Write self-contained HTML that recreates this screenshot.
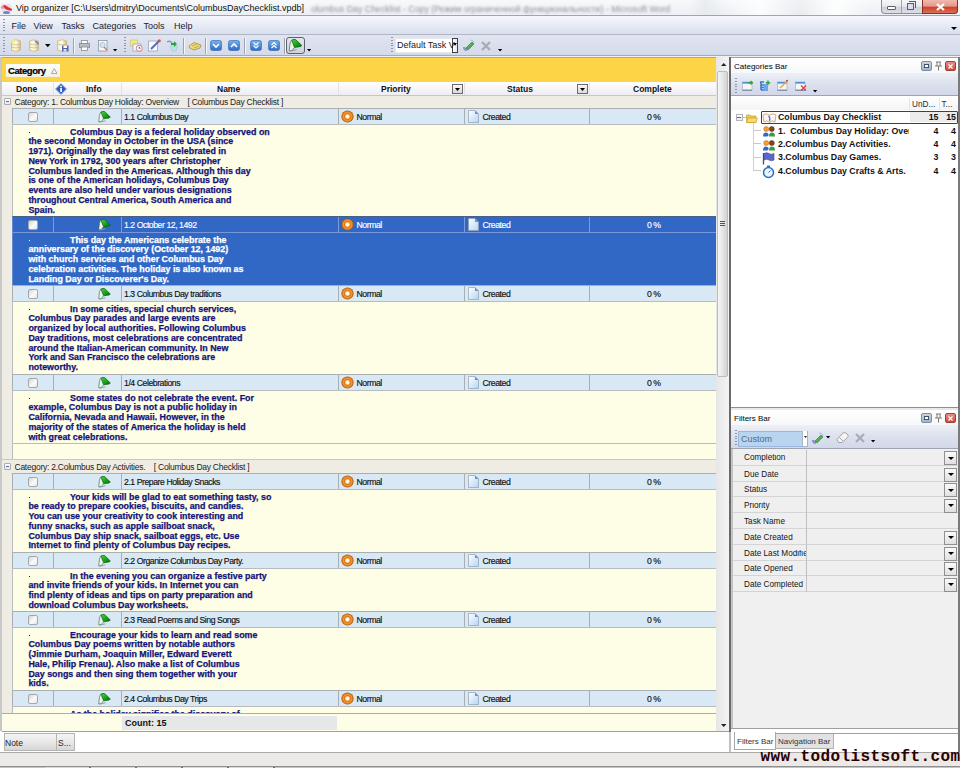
<!DOCTYPE html><html><head><meta charset="utf-8"><style>*{margin:0;padding:0;box-sizing:border-box}
html,body{width:960px;height:768px;overflow:hidden;background:#f0f0f0;font-family:"Liberation Sans",sans-serif;color:#000;position:relative}
.a{position:absolute}
.t{position:absolute;white-space:nowrap;line-height:1}
svg{position:absolute;overflow:visible}
#title{left:0;top:0;width:960px;height:16px;background:linear-gradient(90deg,rgba(255,255,255,0) 0,rgba(255,255,255,0) 690px,rgba(225,228,232,.6) 705px,rgba(255,255,255,0) 725px,rgba(255,255,255,.8) 760px,rgba(230,232,236,.5) 800px,rgba(255,255,255,.9) 835px,rgba(255,255,255,0) 870px),linear-gradient(#f7f9fb,#eceff3);border-bottom:1px solid #a0a6ae}
#menu{left:0;top:16px;width:960px;height:19px;background:linear-gradient(#f5f7fc,#d9dfee);border-bottom:1px solid #b0b6c4}
#tool{left:0;top:35px;width:960px;height:21px;background:linear-gradient(#e1e5f1,#d4daea);border-bottom:1px solid #a8aab2}
.grip{position:absolute;width:1.6px;background:repeating-linear-gradient(#8e98ac 0 1px,transparent 1px 2.8px)}
.sep{position:absolute;width:2px;background:#9aa2b4;border-right:1px solid #f4f6fa}
.mi{position:absolute;top:21.6px;font-size:9px;color:#1a1a30;line-height:1;white-space:nowrap}
#yel{left:2px;top:57px;width:714px;height:25px;background:#fcd445;border-top:1px solid #b5a870}
#hdr{left:2px;top:82px;width:714px;height:13px;background:linear-gradient(#ffffff,#eeeef2)}
.hd{position:absolute;top:84.8px;font-size:8.5px;font-weight:bold;line-height:1;white-space:nowrap;color:#111}
.grp{position:absolute;left:2px;width:714px;background:#efede3;border-top:1px solid #c8c8c0}
.gt{position:absolute;left:12.5px;top:2.9px;font-size:8.5px;letter-spacing:-0.25px;color:#1a1a1a;line-height:1;white-space:nowrap}
.exp{position:absolute;left:2px;top:3px;width:7px;height:7px;border:1px solid #a8acb4;border-radius:1px;background:linear-gradient(#fff,#e8e8e8)}
.exp:after{content:"";position:absolute;left:1px;top:2px;width:3px;height:1px;background:#5a6890}
.row{position:absolute;left:12px;width:704px;height:16px;background:#d9e8f5;border-top:1px solid #a8aeb2;border-left:1px solid #a8aeb2}
.row.sel{background:#3168c6;border-top:1px solid #4a5e8a;border-left-color:#6a8ad0}
.note{position:absolute;left:12px;width:704px;background:#fefee6;border-top:1px solid #b8bcbf;border-left:1px solid #b8bcbf;overflow:hidden}
.note.sel{background:#3168c6;border-top:1px solid #7896d8;border-left-color:#6a8ad0}
.nt{position:absolute;left:15.4px;top:2.5px;font-size:8.9px;font-weight:bold;color:#13137a;line-height:9.8px;white-space:nowrap;text-indent:41.6px;-webkit-text-stroke:0.25px #13137a}
.bul{position:absolute;left:16px;top:6.5px;width:1.2px;height:1.2px;background:#13137a}
.sel .bul{background:#fff}
.sel .nt{color:#fff;-webkit-text-stroke:0.25px #fff}
.c{position:absolute;top:0;height:15px;border-left:1px solid #a8aeb2}
.sel .c{border-left-color:#7e9bd8}
.rt{position:absolute;top:4.3px;font-size:8.7px;letter-spacing:-0.45px;color:#101010;line-height:1;white-space:nowrap;-webkit-text-stroke:0.15px #101010}
.sel .rt{color:#fff;-webkit-text-stroke:0.15px #fff}
.chk{position:absolute;left:14.5px;top:2.5px;width:10px;height:10px;border:1px solid #a4a8ac;border-radius:2px;background:linear-gradient(135deg,#d4d4d4,#fafafa 55%,#e6e6e6)}
.gfoot{position:absolute;left:12px;width:704px;background:#fefee6;border-top:1px solid #b8bcbf;border-left:1px solid #b8bcbf}
.tr{position:absolute;font-size:8.8px;font-weight:bold;color:#111;line-height:1;white-space:nowrap}
.tn{position:absolute;font-size:8.8px;font-weight:bold;color:#111;line-height:1;white-space:nowrap;text-align:right;width:20px}
.fl{position:absolute;left:733px;width:225px;border-bottom:1px solid #d4d4d4;background:#efefef}
.flt{position:absolute;left:11px;font-size:8.2px;color:#151515;line-height:1;white-space:nowrap;width:62px;overflow:hidden}
.fsep{position:absolute;left:73px;top:0;bottom:-1px;width:1px;background:#c0c0c0}
.fdd{position:absolute;left:211px;top:1.5px;width:12.5px;height:14px;border:1px solid #909090;background:linear-gradient(#fafafa,#e0e0e0)}
.fdd:after{content:"";position:absolute;left:2.5px;top:4.5px;border-left:3.2px solid transparent;border-right:3.2px solid transparent;border-top:3.2px solid #000}
</style></head><body>
<div id="title" class="a"></div>
<svg style="left:0px;top:2px" width="13" height="12" viewBox="0 0 13 12"><path d="M1 3 Q3 0.5 6 2 Q9 0.5 11 3 L12 8 Q7 12 2 9 Z" fill="#f0dce4" opacity="0.9"/><path d="M2 4 L5 3 L8 5 L12 7 L11.5 9 L6 7.5 Z" fill="#d8303a"/><path d="M0.5 5 L3 4 L5 6.5 L1.5 7 Z" fill="#e898a8"/><ellipse cx="6.5" cy="10.5" rx="3.5" ry="1.5" fill="#6a8ad0"/></svg>
<div class="t" style="left:16px;top:4px;font-size:9px;color:#101010">Vip organizer [C:\Users\dmitry\Documents\ColumbusDayChecklist.vpdb]</div>
<div class="t" style="left:311px;top:4.6px;font-size:8.8px;color:#8e9298;filter:blur(1.2px)">olumbus Day Checklist - Copy (Режим ограниченной функциональности) - Microsoft Word</div>
<div class="a" style="left:881px;top:0;width:77px;height:14px;border:1px solid #8a8e96;border-top:none;border-radius:0 0 4px 4px;background:linear-gradient(#f6f7f8,#e8eaee 48%,#cdd1d8 55%,#dcdfe5)"></div>
<div class="a" style="left:901px;top:0;width:1px;height:13px;background:#a0a6ae"></div>
<div class="a" style="left:922px;top:0;width:36px;height:14px;border:1px solid #8a3020;border-top:none;border-radius:0 0 4px 0;background:linear-gradient(#f0b8b0,#e49888 48%,#cc4028 55%,#da7058)"></div>
<div class="a" style="left:887px;top:6px;width:9px;height:4px;border:1px solid #5a5e64;background:#fff;border-radius:1px"></div>
<div class="a" style="left:907px;top:3px;width:7px;height:7px;border:1px solid #5a5e64;background:#dde"></div>
<div class="a" style="left:909px;top:1px;width:7px;height:7px;border:1px solid #5a5e64;border-left:none;border-bottom:none"></div>
<svg style="left:936px;top:3px" width="9" height="8"><path d="M1 1 L8 7 M8 1 L1 7" stroke="#fff" stroke-width="2.2"/></svg>
<div id="menu" class="a"></div>
<div class="grip" style="left:3px;top:19px;height:13px"></div>
<div class="mi" style="left:11.5px">File</div>
<div class="mi" style="left:33.5px">View</div>
<div class="mi" style="left:61.5px">Tasks</div>
<div class="mi" style="left:92.5px">Categories</div>
<div class="mi" style="left:143.5px">Tools</div>
<div class="mi" style="left:174px">Help</div>
<svg style="left:951px;top:27px" width="7" height="4"><path d="M0 0 H6 L3 3 Z" fill="#000"/></svg>
<div id="tool" class="a"></div>
<div class="grip" style="left:3px;top:37px;height:17px"></div>
<svg style="left:11px;top:39px" width="10" height="13" viewBox="0 0 10 13"><defs><linearGradient id="dbg" x1="0" x2="1"><stop offset="0" stop-color="#f6eec8"/><stop offset="0.5" stop-color="#fffbea"/><stop offset="1" stop-color="#d4bc80"/></linearGradient></defs><path d="M0.5 2 Q5 -0.5 9.5 2 V11 Q5 13.5 0.5 11 Z" fill="url(#dbg)" stroke="#cdb67c" stroke-width="0.8"/><path d="M0.5 5 Q5 7 9.5 5 M0.5 8 Q5 10 9.5 8" stroke="#c8b070" fill="none" stroke-width="0.7"/><circle cx="2" cy="2.5" r="2" fill="#f8f080" opacity="0.8"/></svg>
<svg style="left:29px;top:39px" width="11" height="13" viewBox="0 0 11 13"><path d="M0.5 2 Q5 -0.5 9.5 2 V11 Q5 13.5 0.5 11 Z" fill="url(#dbg)" stroke="#cdb67c" stroke-width="0.8"/><path d="M0.5 5 Q5 7 9.5 5 M0.5 8 Q5 10 9.5 8" stroke="#c8b070" fill="none" stroke-width="0.7"/><path d="M5 1 L9 3 L10 6 L7 4 Z" fill="#5a86c8"/></svg>
<svg style="left:45px;top:44px" width="6" height="4"><path d="M0 0 H5.5 L2.75 3.2 Z" fill="#000"/></svg>
<svg style="left:57px;top:39px" width="12" height="13" viewBox="0 0 12 13"><path d="M0.5 2 Q5 -0.5 9.5 2 V11 Q5 13.5 0.5 11 Z" fill="url(#dbg)" stroke="#cdb67c" stroke-width="0.8"/><path d="M0.5 5 Q5 7 9.5 5" stroke="#c8b070" fill="none" stroke-width="0.7"/><rect x="5" y="6.5" width="6.5" height="6" fill="#4a68b8"/><rect x="6.5" y="6.5" width="3.5" height="2.5" fill="#fff"/><rect x="6.5" y="10" width="3" height="2.5" fill="#dde"/></svg>
<div class="sep" style="left:73px;top:38px;height:16px"></div>
<svg style="left:79px;top:40px" width="11" height="11" viewBox="0 0 11 11"><rect x="2.5" y="0.5" width="6" height="3" fill="#fff" stroke="#8a8a8a" stroke-width="0.8"/><rect x="0.5" y="3.5" width="10" height="4" fill="#b8bcc4" stroke="#8a8a8a" stroke-width="0.8"/><rect x="2.5" y="7" width="6" height="3.5" fill="#fff" stroke="#8a8a8a" stroke-width="0.8"/></svg>
<svg style="left:98px;top:40px" width="10" height="12" viewBox="0 0 10 12"><rect x="0.5" y="0.5" width="8.5" height="10.5" fill="#f4f6fa" stroke="#8a94a4" stroke-width="0.8"/><circle cx="4.5" cy="5" r="2.6" fill="#cfe8f0" stroke="#9ab" stroke-width="0.6"/><path d="M6 7 L9 10" stroke="#d08040" stroke-width="1.4"/></svg>
<svg style="left:113px;top:49px" width="5" height="3"><path d="M0 0 H4.2 L2.1 2.5 Z" fill="#000"/></svg>
<div class="grip" style="left:124px;top:37px;height:17px"></div>
<svg style="left:130px;top:39px" width="13" height="13" viewBox="0 0 13 13"><rect x="0.5" y="1" width="7" height="6" fill="#f4e888" stroke="#d0c060" stroke-width="0.6"/><rect x="3" y="5" width="8" height="7" fill="#f4f4f8" stroke="#98a0b0" stroke-width="0.7"/><circle cx="9.3" cy="9.3" r="3" fill="#f8f8f8" stroke="#e07080" stroke-width="0.9"/><path d="M9.3 7.8 V9.3 H10.5" stroke="#404040" stroke-width="0.8" fill="none"/></svg>
<svg style="left:148px;top:39px" width="13" height="13" viewBox="0 0 13 13"><rect x="0.5" y="2" width="9" height="10" fill="#fafbff" stroke="#9aa4b8" stroke-width="0.8"/><path d="M3 10 L11 2" stroke="#5a6ab0" stroke-width="2"/><circle cx="11.3" cy="1.8" r="1.5" fill="#d05838"/></svg>
<svg style="left:166px;top:39px" width="13" height="13" viewBox="0 0 13 13"><path d="M4 7 L6 12 H10 L11.5 7 Z" fill="#bfe0f0" stroke="#8cc" stroke-width="0.6"/><path d="M1 3 Q4 1 6 4" stroke="#8898c8" stroke-width="1.5" fill="none"/><path d="M5 5 L8 2 L11 5 L9 5 L9 8 L7 8 L7 5 Z" fill="#30a040" transform="rotate(90 8 5)"/></svg>
<div class="sep" style="left:183px;top:38px;height:16px"></div>
<svg style="left:188px;top:41px" width="14" height="10" viewBox="0 0 14 10"><path d="M1 5 L6 1.5 L13 4 L12 7 L6 9 L1.5 7 Z" fill="#f0d878" stroke="#a89048" stroke-width="0.8"/><path d="M4 5 L9 3 M6 7 L11 5" stroke="#b89848" stroke-width="0.8"/></svg>
<div class="sep" style="left:205px;top:38px;height:16px"></div>
<svg style="left:210px;top:40px" width="12" height="11" viewBox="0 0 12 11"><defs><linearGradient id="bb" x1="0" y1="0" x2="0" y2="1"><stop offset="0" stop-color="#78b0ec"/><stop offset="1" stop-color="#2c6cc4"/></linearGradient></defs><rect x="0.5" y="0.5" width="11" height="10" rx="2" fill="url(#bb)" stroke="#3a70b8" stroke-width="0.7"/><path d="M3 4 L6 7 L9 4" stroke="#fff" stroke-width="1.6" fill="none"/></svg>
<svg style="left:228px;top:40px" width="12" height="11" viewBox="0 0 12 11"><rect x="0.5" y="0.5" width="11" height="10" rx="2" fill="url(#bb)" stroke="#3a70b8" stroke-width="0.7"/><path d="M3 7 L6 4 L9 7" stroke="#fff" stroke-width="1.6" fill="none"/></svg>
<div class="sep" style="left:244px;top:38px;height:16px"></div>
<svg style="left:250px;top:40px" width="12" height="11" viewBox="0 0 12 11"><rect x="0.5" y="0.5" width="11" height="10" rx="2" fill="url(#bb)" stroke="#3a70b8" stroke-width="0.7"/><path d="M3.5 2.5 L6 5 L8.5 2.5 M3.5 5.5 L6 8 L8.5 5.5" stroke="#fff" stroke-width="1.2" fill="none"/></svg>
<svg style="left:268px;top:40px" width="12" height="11" viewBox="0 0 12 11"><rect x="0.5" y="0.5" width="11" height="10" rx="2" fill="url(#bb)" stroke="#3a70b8" stroke-width="0.7"/><path d="M3.5 5 L6 2.5 L8.5 5 M3.5 8 L6 5.5 L8.5 8" stroke="#fff" stroke-width="1.2" fill="none"/></svg>
<div class="sep" style="left:284px;top:38px;height:16px"></div>
<div class="a" style="left:286px;top:37px;width:19px;height:17px;border:1.5px solid #5c6068;border-radius:3px;background:linear-gradient(#e4e6ea,#cdd2dc)"></div>
<svg style="left:288px;top:39px" width="15" height="13" viewBox="0 0 13 12"><use href="#flag"/></svg>
<svg style="left:307px;top:49px" width="5" height="3"><path d="M0 0 H4.2 L2.1 2.5 Z" fill="#000"/></svg>
<div class="grip" style="left:391px;top:37px;height:17px"></div>
<div class="a" style="left:395px;top:38px;width:63px;height:15px;background:#fff;border:1px solid #e6e8f0"></div>
<div class="a" style="left:452px;top:38px;width:6px;height:15px;background:linear-gradient(90deg,#fff,#e8e8e8);border:1px solid #404040"></div>
<svg style="left:453px;top:43px" width="5" height="4"><path d="M0 0 H4 L2 2.8 Z" fill="#000"/></svg>
<div class="t" style="left:397px;top:40.8px;font-size:9px;color:#1a1a1a">Default Task V</div>
<svg style="left:462px;top:39px" width="13" height="13" viewBox="0 0 13 13"><path d="M1 8 Q1 12 5 12 L5 9 Q3 9 3 8 Z" fill="#8890d0"/><path d="M4 9 L10 3 L12 5 L6 11 Z" fill="#50b050" stroke="#308030" stroke-width="0.6"/><path d="M8 1 Q12 1 12 4" stroke="#a8c0e0" fill="none"/></svg>
<svg style="left:481px;top:41px" width="10" height="10" viewBox="0 0 10 10"><path d="M1 1 L9 9 M9 1 L1 9" stroke="#a8acb4" stroke-width="2.4"/></svg>
<svg style="left:498px;top:49px" width="5" height="3"><path d="M0 0 H4.2 L2.1 2.5 Z" fill="#000"/></svg>

<svg width="0" height="0" style="position:absolute"><defs>
<symbol id="flag" viewBox="0 0 13 12"><defs><linearGradient id="fgg" x1="0" y1="0" x2="1" y2="1"><stop offset="0" stop-color="#50d050"/><stop offset="0.6" stop-color="#10a010"/><stop offset="1" stop-color="#087008"/></linearGradient></defs><path d="M2.8 1.2 Q3.8 0.2 6.5 0.4 L12.3 6 L11 7 L5.5 7.8 Z" fill="url(#fgg)" stroke="#0a5a0a" stroke-width="0.7"/><path d="M0.7 10.8 L1.4 4.5 Q2 1.8 2.9 1.2 L5.5 7.8 L3.2 10.6 Z" fill="#eef3ee" stroke="#2a6a2a" stroke-width="0.6"/><path d="M1.5 11.2 L7.5 9.8" stroke="#8a98a8" stroke-width="0.9"/></symbol>
<symbol id="prio" viewBox="0 0 13 13"><defs><radialGradient id="pg" cx="0.5" cy="0.5" r="0.5"><stop offset="0" stop-color="#fffff4"/><stop offset="0.28" stop-color="#fff4d8"/><stop offset="0.38" stop-color="#f0a048"/><stop offset="0.5" stop-color="#e07a18"/><stop offset="0.7" stop-color="#f09838"/><stop offset="0.88" stop-color="#d06a10"/><stop offset="1" stop-color="#a85008"/></radialGradient></defs><circle cx="6.5" cy="6.5" r="6.1" fill="url(#pg)"/></symbol>
<symbol id="doc" viewBox="0 0 11 13"><defs><linearGradient id="dg" x1="0" y1="0" x2="1" y2="1"><stop offset="0" stop-color="#ffffff"/><stop offset="1" stop-color="#b8d4f0"/></linearGradient></defs><path d="M0.5 0.5 H7 L10.5 4 V12.5 H0.5 Z" fill="url(#dg)" stroke="#8aa0b8" stroke-width="0.7"/><path d="M7 0.5 V4 H10.5 Z" fill="#7090c0"/></symbol>
</defs></svg>
<div class="a" style="left:0;top:57px;width:2px;height:674px;background:#c8c8c8"></div>
<div class="a" style="left:2px;top:95px;width:10px;height:636px;background:#eeece3"></div>
<div id="yel" class="a"></div>
<div class="a" style="left:6px;top:64px;width:54px;height:13px;background:linear-gradient(#fffffa,#f2f0e6)"></div>
<div class="t" style="left:8px;top:65.7px;font-size:9.5px;letter-spacing:-0.45px;font-weight:bold;color:#000;-webkit-text-stroke:0.2px #000">Category</div>
<svg style="left:50.5px;top:67.5px" width="7" height="6"><path d="M0.5 5.5 L3.25 0.5 L6 5.5 Z" fill="none" stroke="#a0a0a0" stroke-width="0.9"/></svg>
<div id="hdr" class="a"></div>
<div class="a" style="left:53px;top:83px;width:1px;height:12px;background:#e2e2e2"></div>
<div class="a" style="left:121px;top:83px;width:1px;height:12px;background:#e2e2e2"></div>
<div class="a" style="left:338px;top:83px;width:1px;height:12px;background:#e2e2e2"></div>
<div class="a" style="left:464px;top:83px;width:1px;height:12px;background:#e2e2e2"></div>
<div class="a" style="left:589px;top:83px;width:1px;height:12px;background:#e2e2e2"></div>
<div class="hd" style="left:16px">Done</div>
<svg style="left:55px;top:83px" width="12" height="12" viewBox="0 0 12 12"><path d="M6 0.5 L11.5 6 L6 11.5 L0.5 6 Z" fill="#2a5cc0" stroke="#9ab4dc"/><rect x="5.2" y="5" width="1.7" height="4" fill="#fff"/><rect x="5.2" y="2.8" width="1.7" height="1.4" fill="#fff"/></svg>
<div class="hd" style="left:86px">Info</div>
<div class="hd" style="left:217px">Name</div>
<div class="hd" style="left:381px">Priority</div>
<div class="hd" style="left:507px">Status</div>
<div class="hd" style="left:633px">Complete</div>
<div class="a" style="left:452px;top:84px;width:11px;height:10px;border:1px solid #6a6a6a;background:linear-gradient(#fafafa,#d8d8d8)"></div>
<svg style="left:455px;top:88px" width="6" height="4"><path d="M0 0 H5 L2.5 3 Z" fill="#000"/></svg>
<div class="a" style="left:577px;top:84px;width:11px;height:10px;border:1px solid #6a6a6a;background:linear-gradient(#fafafa,#d8d8d8)"></div>
<svg style="left:580px;top:88px" width="6" height="4"><path d="M0 0 H5 L2.5 3 Z" fill="#000"/></svg>

<div class="grp" style="top:95px;height:13px"><div class="exp" style="top:2px"></div><div class="gt" style="top:1.9px">Category: 1. Columbus Day Holiday: Overview&nbsp;&nbsp;&nbsp; [ Columbus Day Checklist ]</div></div>
<div class="row" style="top:108px"><div class="c" style="left:40px"></div><div class="c" style="left:108px"></div><div class="c" style="left:325px"></div><div class="c" style="left:451px"></div><div class="c" style="left:576px"></div><div class="chk"></div><svg style="left:85px;top:2px" width="13" height="12" viewBox="0 0 13 12"><use href="#flag"/></svg><div class="rt" style="left:111px">1.1 Columbus Day</div><svg style="left:328px;top:1px" width="13" height="13" viewBox="0 0 13 13"><use href="#prio"/></svg><div class="rt" style="left:343.5px">Normal</div><svg style="left:455px;top:1px" width="11" height="13" viewBox="0 0 11 13"><use href="#doc"/></svg><div class="rt" style="left:469.5px">Created</div><div class="rt" style="left:634px">0 %</div></div>
<div class="note" style="top:124px;height:92px"><div class="nt">Columbus Day is a federal holiday observed on<br>the second Monday in October in the USA (since<br>1971). Originally the day was first celebrated in<br>New York in 1792, 300 years after Christopher<br>Columbus landed in the Americas. Although this day<br>is one of the American holidays, Columbus Day<br>events are also held under various designations<br>throughout Central America, South America and<br>Spain.</div><div class="bul"></div></div>
<div class="row sel" style="top:216px"><div class="c" style="left:40px"></div><div class="c" style="left:108px"></div><div class="c" style="left:325px"></div><div class="c" style="left:451px"></div><div class="c" style="left:576px"></div><div class="chk"></div><svg style="left:85px;top:2px" width="13" height="12" viewBox="0 0 13 12"><use href="#flag"/></svg><div class="rt" style="left:111px">1.2 October 12, 1492</div><svg style="left:328px;top:1px" width="13" height="13" viewBox="0 0 13 13"><use href="#prio"/></svg><div class="rt" style="left:343.5px">Normal</div><svg style="left:455px;top:1px" width="11" height="13" viewBox="0 0 11 13"><use href="#doc"/></svg><div class="rt" style="left:469.5px">Created</div><div class="rt" style="left:634px">0 %</div></div>
<div class="note sel" style="top:232px;height:53px"><div class="nt">This day the Americans celebrate the<br>anniversary of the discovery (October 12, 1492)<br>with church services and other Columbus Day<br>celebration activities. The holiday is also known as<br>Landing Day or Discoverer&#x27;s Day.</div><div class="bul"></div></div>
<div class="row" style="top:285px"><div class="c" style="left:40px"></div><div class="c" style="left:108px"></div><div class="c" style="left:325px"></div><div class="c" style="left:451px"></div><div class="c" style="left:576px"></div><div class="chk"></div><svg style="left:85px;top:2px" width="13" height="12" viewBox="0 0 13 12"><use href="#flag"/></svg><div class="rt" style="left:111px">1.3 Columbus Day traditions</div><svg style="left:328px;top:1px" width="13" height="13" viewBox="0 0 13 13"><use href="#prio"/></svg><div class="rt" style="left:343.5px">Normal</div><svg style="left:455px;top:1px" width="11" height="13" viewBox="0 0 11 13"><use href="#doc"/></svg><div class="rt" style="left:469.5px">Created</div><div class="rt" style="left:634px">0 %</div></div>
<div class="note" style="top:301px;height:73px"><div class="nt">In some cities, special church services,<br>Columbus Day parades and large events are<br>organized by local authorities. Following Columbus<br>Day traditions, most celebrations are concentrated<br>around the Italian-American community. In New<br>York and San Francisco the celebrations are<br>noteworthy.</div><div class="bul"></div></div>
<div class="row" style="top:374px"><div class="c" style="left:40px"></div><div class="c" style="left:108px"></div><div class="c" style="left:325px"></div><div class="c" style="left:451px"></div><div class="c" style="left:576px"></div><div class="chk"></div><svg style="left:85px;top:2px" width="13" height="12" viewBox="0 0 13 12"><use href="#flag"/></svg><div class="rt" style="left:111px">1/4 Celebrations</div><svg style="left:328px;top:1px" width="13" height="13" viewBox="0 0 13 13"><use href="#prio"/></svg><div class="rt" style="left:343.5px">Normal</div><svg style="left:455px;top:1px" width="11" height="13" viewBox="0 0 11 13"><use href="#doc"/></svg><div class="rt" style="left:469.5px">Created</div><div class="rt" style="left:634px">0 %</div></div>
<div class="note" style="top:390px;height:53px"><div class="nt">Some states do not celebrate the event. For<br>example, Columbus Day is not a public holiday in<br>California, Nevada and Hawaii. However, in the<br>majority of the states of America the holiday is held<br>with great celebrations.</div><div class="bul"></div></div>
<div class="gfoot" style="top:443px;height:16px"></div>
<div class="grp" style="top:459px;height:14px"><div class="exp" style="top:3px"></div><div class="gt" style="top:2.9px">Category: 2.Columbus Day Activities.&nbsp;&nbsp;&nbsp; [ Columbus Day Checklist ]</div></div>
<div class="row" style="top:473px"><div class="c" style="left:40px"></div><div class="c" style="left:108px"></div><div class="c" style="left:325px"></div><div class="c" style="left:451px"></div><div class="c" style="left:576px"></div><div class="chk"></div><svg style="left:85px;top:2px" width="13" height="12" viewBox="0 0 13 12"><use href="#flag"/></svg><div class="rt" style="left:111px">2.1 Prepare Holiday Snacks</div><svg style="left:328px;top:1px" width="13" height="13" viewBox="0 0 13 13"><use href="#prio"/></svg><div class="rt" style="left:343.5px">Normal</div><svg style="left:455px;top:1px" width="11" height="13" viewBox="0 0 11 13"><use href="#doc"/></svg><div class="rt" style="left:469.5px">Created</div><div class="rt" style="left:634px">0 %</div></div>
<div class="note" style="top:489px;height:63px"><div class="nt">Your kids will be glad to eat something tasty, so<br>be ready to prepare cookies, biscuits, and candies.<br>You can use your creativity to cook interesting and<br>funny snacks, such as apple sailboat snack,<br>Columbus Day ship snack, sailboat eggs, etc. Use<br>Internet to find plenty of Columbus Day recipes.</div><div class="bul"></div></div>
<div class="row" style="top:552px"><div class="c" style="left:40px"></div><div class="c" style="left:108px"></div><div class="c" style="left:325px"></div><div class="c" style="left:451px"></div><div class="c" style="left:576px"></div><div class="chk"></div><svg style="left:85px;top:2px" width="13" height="12" viewBox="0 0 13 12"><use href="#flag"/></svg><div class="rt" style="left:111px">2.2 Organize Columbus Day Party.</div><svg style="left:328px;top:1px" width="13" height="13" viewBox="0 0 13 13"><use href="#prio"/></svg><div class="rt" style="left:343.5px">Normal</div><svg style="left:455px;top:1px" width="11" height="13" viewBox="0 0 11 13"><use href="#doc"/></svg><div class="rt" style="left:469.5px">Created</div><div class="rt" style="left:634px">0 %</div></div>
<div class="note" style="top:568px;height:43px"><div class="nt">In the evening you can organize a festive party<br>and invite friends of your kids. In Internet you can<br>find plenty of ideas and tips on party preparation and<br>download Columbus Day worksheets.</div><div class="bul"></div></div>
<div class="row" style="top:611px"><div class="c" style="left:40px"></div><div class="c" style="left:108px"></div><div class="c" style="left:325px"></div><div class="c" style="left:451px"></div><div class="c" style="left:576px"></div><div class="chk"></div><svg style="left:85px;top:2px" width="13" height="12" viewBox="0 0 13 12"><use href="#flag"/></svg><div class="rt" style="left:111px">2.3 Read Poems and Sing Songs</div><svg style="left:328px;top:1px" width="13" height="13" viewBox="0 0 13 13"><use href="#prio"/></svg><div class="rt" style="left:343.5px">Normal</div><svg style="left:455px;top:1px" width="11" height="13" viewBox="0 0 11 13"><use href="#doc"/></svg><div class="rt" style="left:469.5px">Created</div><div class="rt" style="left:634px">0 %</div></div>
<div class="note" style="top:627px;height:63px"><div class="nt">Encourage your kids to learn and read some<br>Columbus Day poems written by notable authors<br>(Jimmie Durham, Joaquin Miller, Edward Everett<br>Hale, Philip Frenau). Also make a list of Columbus<br>Day songs and then sing them together with your<br>kids.</div><div class="bul"></div></div>
<div class="row" style="top:690px"><div class="c" style="left:40px"></div><div class="c" style="left:108px"></div><div class="c" style="left:325px"></div><div class="c" style="left:451px"></div><div class="c" style="left:576px"></div><div class="chk"></div><svg style="left:85px;top:2px" width="13" height="12" viewBox="0 0 13 12"><use href="#flag"/></svg><div class="rt" style="left:111px">2.4 Columbus Day Trips</div><svg style="left:328px;top:1px" width="13" height="13" viewBox="0 0 13 13"><use href="#prio"/></svg><div class="rt" style="left:343.5px">Normal</div><svg style="left:455px;top:1px" width="11" height="13" viewBox="0 0 11 13"><use href="#doc"/></svg><div class="rt" style="left:469.5px">Created</div><div class="rt" style="left:634px">0 %</div></div>
<div class="note" style="top:706px;height:7px"><div class="nt">As the holiday signifies the discovery of</div><div class="bul"></div></div>
<!-- footer -->
<div class="a" style="left:2px;top:713px;width:714px;height:18px;background:#fdfde8;border-top:1px solid #a8acb0"></div>
<div class="a" style="left:122px;top:716px;width:215px;height:14px;background:#e6e7e8"></div>
<div class="t" style="left:125px;top:718.5px;font-size:9px;font-weight:bold;color:#111">Count: 15</div>
<!-- scrollbar -->
<div class="a" style="left:716px;top:57px;width:13px;height:674px;background:linear-gradient(90deg,#e6e6e6,#f4f4f4)"></div>
<svg style="left:720.5px;top:63px" width="6" height="3"><path d="M0 3 H5.5 L2.75 0 Z" fill="#222"/></svg>
<div class="a" style="left:717px;top:71px;width:11px;height:306px;border:1px solid #bcbcbc;border-radius:2px;background:linear-gradient(90deg,#f6f6f6,#e6e6e6 50%,#d2d2d2)"></div>
<div class="a" style="left:720px;top:221px;width:5px;height:5px;background:repeating-linear-gradient(#555 0 1px,transparent 1px 2px)"></div>
<svg style="left:720.5px;top:723.5px" width="6" height="3"><path d="M0 0 H5.5 L2.75 3 Z" fill="#222"/></svg>
<div class="a" style="left:2px;top:731px;width:727px;height:1px;background:#a0a0a0"></div>
<!-- splitter -->
<div class="a" style="left:729px;top:57px;width:2px;height:675px;background:#6a6a6a"></div><div class="a" style="left:729px;top:732px;width:2px;height:20px;background:#c0c0c0"></div>
<!-- bottom tabs -->
<div class="a" style="left:0;top:732px;width:729px;height:21px;background:#fff"></div>
<div class="a" style="left:4px;top:733px;width:53px;height:18px;border:1px solid #b4b4b4;background:linear-gradient(#f4f4f4,#e8e8e8 50%,#d6d6d6)"></div>
<div class="a" style="left:56px;top:733px;width:19px;height:18px;border:1px solid #b4b4b4;background:linear-gradient(#f4f4f4,#e8e8e8 50%,#d6d6d6)"></div>
<div class="t" style="left:5px;top:738.5px;font-size:8.5px;color:#222">Note</div>
<div class="t" style="left:58px;top:738.5px;font-size:8.5px;color:#222">S...</div>
<!-- status bar -->
<div class="a" style="left:0;top:752px;width:960px;height:1px;background:#a8a8a8"></div>
<div class="a" style="left:0;top:753px;width:960px;height:13px;background:#ece9e7"></div>
<div class="a" style="left:0;top:766px;width:960px;height:2px;background:#c4c4c4;border-top:1px solid #8e8e8e"></div><div class="a" style="left:45px;top:766.5px;width:230px;height:1.5px;background:repeating-linear-gradient(90deg,#d8d8d8 0 44px,#707070 44px 46px)"></div>


<!-- CATEGORIES PANEL -->
<div class="a" style="left:731px;top:57px;width:227px;height:350px;background:#fff;border-top:1px solid #a0a0a0"></div>
<div class="a" style="left:731px;top:58px;width:227px;height:15px;background:linear-gradient(#ffffff,#f6f7f9)"></div>
<div class="t" style="left:734px;top:62.5px;font-size:8px;color:#050505">Categories Bar</div>
<div class="a" style="left:921px;top:61px;width:11px;height:10px;border:1px solid #7890a8;border-radius:2px;background:linear-gradient(#c8d4e0,#a4b4c8)"></div>
<div class="a" style="left:924px;top:64px;width:5px;height:4px;border:1px solid #40506a;background:#fff"></div>
<svg style="left:934px;top:61px" width="9" height="10" viewBox="0 0 9 10"><path d="M2 1 H7 M3 1 V5 M6 1 V5 M1 5 H8 M4.5 5 V9.5" stroke="#7a7a7a" fill="none" stroke-width="1"/></svg>
<div class="a" style="left:945px;top:61px;width:11px;height:10px;border:1px solid #a04030;border-radius:2px;background:linear-gradient(#e8908a,#c84c3c)"></div>
<svg style="left:948px;top:63.5px" width="5" height="5"><path d="M0.5 0.5 L4.5 4.5 M4.5 0.5 L0.5 4.5" stroke="#fff" stroke-width="1.3"/></svg>
<div class="a" style="left:731px;top:73px;width:227px;height:23px;background:linear-gradient(#eef0f6,#dde2ef 45%,#d2d8ea);border-bottom:1px solid #9ea4b0"></div>
<div class="grip" style="left:735px;top:78px;height:16px"></div>
<svg style="left:742px;top:80px" width="12" height="12" viewBox="0 0 12 12"><rect x="0.5" y="2" width="9.5" height="8.5" fill="#f4f6fa" stroke="#9aa8b8" stroke-width="0.6"/><rect x="0.5" y="2" width="9.5" height="1.6" fill="#4a90d8"/><rect x="0.5" y="9.5" width="9.5" height="1.5" fill="#8894a8"/><path d="M6 2.8 H10 M8.5 1 L10.5 2.8 L8.5 4.6" stroke="#30a040" stroke-width="1.3" fill="none"/></svg>
<svg style="left:759px;top:80px" width="13" height="12" viewBox="0 0 13 12"><path d="M1 2 H5 M2 2 V10 M2 5 H7 M2 7.5 H7 M2 10 H7" stroke="#3a7ad0" stroke-width="1.6"/><rect x="5" y="4" width="4" height="7" fill="#6aa8e8"/><path d="M9 0.5 V5 M6.8 2.7 H11.2" stroke="#30a040" stroke-width="1.4"/></svg>
<svg style="left:777px;top:80px" width="12" height="12" viewBox="0 0 12 12"><rect x="0.5" y="2" width="9.5" height="8.5" fill="#f4f6fa" stroke="#9aa8b8" stroke-width="0.6"/><rect x="0.5" y="2" width="9.5" height="1.6" fill="#4a90d8"/><rect x="0.5" y="9.5" width="9.5" height="1.5" fill="#8894a8"/><path d="M3 8 L10 1.5" stroke="#e0b040" stroke-width="1.6"/><path d="M9 1 L11 0.5" stroke="#d04040" stroke-width="1.4"/></svg>
<svg style="left:795px;top:80px" width="12" height="12" viewBox="0 0 12 12"><rect x="0.5" y="2" width="9.5" height="8.5" fill="#f4f6fa" stroke="#9aa8b8" stroke-width="0.6"/><rect x="0.5" y="2" width="9.5" height="1.6" fill="#4a90d8"/><rect x="0.5" y="9.5" width="9.5" height="1.5" fill="#8894a8"/><path d="M6 5.5 L11 10.5 M11 5.5 L6 10.5" stroke="#d84040" stroke-width="1.3"/></svg>
<svg style="left:813px;top:90px" width="5" height="3"><path d="M0 0 H4.2 L2.1 2.5 Z" fill="#000"/></svg>
<div class="a" style="left:731px;top:97px;width:227px;height:13px;background:linear-gradient(#ffffff,#f4f4f6)"></div>
<div class="a" style="left:909px;top:98px;width:1px;height:12px;background:#e4e4e4"></div>
<div class="a" style="left:939px;top:98px;width:1px;height:12px;background:#e4e4e4"></div>
<div class="t" style="left:912px;top:100.8px;font-size:8.2px;color:#2a2a2a">UnD...</div>
<div class="t" style="left:941.5px;top:100.8px;font-size:8.2px;color:#2a2a2a">T...</div>
<div class="a" style="left:958px;top:57px;width:2px;height:695px;background:#7a7a7a"></div>
<!-- tree -->
<div class="a" style="left:735.5px;top:113.5px;width:7px;height:7px;border:1px solid #b0b4bc;background:linear-gradient(#fff,#eaeaea)"></div>
<div class="a" style="left:737px;top:116.5px;width:4px;height:1px;background:#606a80"></div>
<div class="a" style="left:742.5px;top:117px;width:4px;height:1px;background:#c0c0c0"></div>
<svg style="left:746px;top:113px" width="12" height="10" viewBox="0 0 12 10"><path d="M0.5 2 H4 L5 3 H10 V9.5 H0.5 Z" fill="#f0c848" stroke="#c09828" stroke-width="0.6"/><path d="M2 5 H11.5 L10 9.5 H0.5 Z" fill="#f8dc68" stroke="#c09828" stroke-width="0.6"/></svg>
<div class="a" style="left:753px;top:123px;width:1px;height:48px;background:#d0d0d0"></div>
<div class="a" style="left:754px;top:129.5px;width:7px;height:1px;background:#c8c8c8"></div>
<div class="a" style="left:754px;top:143px;width:7px;height:1px;background:#c8c8c8"></div>
<div class="a" style="left:754px;top:156.5px;width:7px;height:1px;background:#c8c8c8"></div>
<div class="a" style="left:754px;top:170px;width:7px;height:1px;background:#c8c8c8"></div>
<div class="a" style="left:761px;top:110.5px;width:197px;height:13px;border:1.5px solid #404040;border-radius:1px;background:#fff"></div>
<div class="a" style="left:910px;top:112px;width:47px;height:10px;background:#ececec"></div>
<svg style="left:762px;top:111.5px" width="15" height="12" viewBox="0 0 15 12"><path d="M1 3 Q4 0.5 7.5 3 Q11 0.5 14 3 L13 10 Q10 7.5 7.5 10.5 Q5 7.5 2 10 Z" fill="#fbf6ee" stroke="#d0a070" stroke-width="0.9"/><path d="M7.5 3 V10.5" stroke="#c8a080" stroke-width="0.5"/><path d="M6.5 4 Q8.5 5.5 7.5 9" stroke="#4a7ad0" stroke-width="1.3" fill="none"/></svg>
<div class="tr" style="top:113px;left:778px">Columbus Day Checklist</div>
<div class="tn" style="top:113px;left:918.5px">15</div><div class="tn" style="top:113px;left:936px">15</div>
<div class="tr" style="top:126.8px;left:778px;width:131px;overflow:hidden">1.&nbsp; Columbus Day Holiday: Overview</div>
<div class="tn" style="top:126.8px;left:918.5px">4</div><div class="tn" style="top:126.8px;left:936px">4</div>
<div class="tr" style="top:140.1px;left:778px">2.Columbus Day Activities.</div>
<div class="tn" style="top:140.1px;left:918.5px">4</div><div class="tn" style="top:140.1px;left:936px">4</div>
<div class="tr" style="top:153.3px;left:778px">3.Columbus Day Games.</div>
<div class="tn" style="top:153.3px;left:918.5px">3</div><div class="tn" style="top:153.3px;left:936px">3</div>
<div class="tr" style="top:167px;left:778px">4.Columbus Day Crafts &amp; Arts.</div>
<div class="tn" style="top:167px;left:918.5px">4</div><div class="tn" style="top:167px;left:936px">4</div>
<svg style="left:762px;top:125px" width="14" height="12" viewBox="0 0 14 12"><use href="#people"/></svg>
<svg style="left:762px;top:138.5px" width="14" height="12" viewBox="0 0 14 12"><use href="#people"/></svg>
<svg style="left:762px;top:151.5px" width="13" height="13" viewBox="0 0 13 13"><path d="M1.5 1 V12.5" stroke="#40507a" stroke-width="1.3"/><path d="M2 1.5 Q5 0 7 1.5 Q9.5 3 12 1.5 V8 Q9.5 9.5 7 8 Q5 6.5 2 8 Z" fill="#5a68c8" stroke="#3a4898" stroke-width="0.6"/></svg>
<svg style="left:762px;top:165px" width="13" height="13" viewBox="0 0 13 13"><circle cx="6.5" cy="7.5" r="5" fill="#e8f4ff" stroke="#2a70c8" stroke-width="1.5"/><rect x="5" y="0.5" width="3" height="1.8" fill="#2a70c8"/><path d="M6.5 7.5 L8.5 5.5" stroke="#2a70c8" stroke-width="1"/></svg>
<svg width="0" height="0" style="position:absolute"><defs><symbol id="people" viewBox="0 0 14 12"><path d="M1 11.5 Q1 7.5 4 7.5 Q6.5 7.5 6.8 10 L5.5 11.5 Z" fill="#3068c8"/><path d="M7 11.5 Q7 7.5 10 7.5 Q13 7.5 13 11.5 Z" fill="#30a040"/><circle cx="4.2" cy="4" r="2.5" fill="#eea038" stroke="#b87018" stroke-width="0.5"/><circle cx="9.8" cy="4" r="2.5" fill="#8a4418" stroke="#5a2808" stroke-width="0.5"/></symbol></defs></svg>

<!-- FILTERS PANEL -->
<div class="a" style="left:731px;top:407px;width:227px;height:3px;background:#e8e8e8;border-top:1px solid #909090"></div>
<div class="a" style="left:731px;top:410px;width:227px;height:322px;background:#f0f0f0"></div>
<div class="a" style="left:731px;top:410px;width:227px;height:15px;background:linear-gradient(#ffffff,#f6f7f9)"></div>
<div class="t" style="left:734px;top:414.5px;font-size:8px;color:#050505">Filters Bar</div>
<div class="a" style="left:921px;top:413px;width:11px;height:10px;border:1px solid #7890a8;border-radius:2px;background:linear-gradient(#c8d4e0,#a4b4c8)"></div>
<div class="a" style="left:924px;top:416px;width:5px;height:4px;border:1px solid #40506a;background:#fff"></div>
<svg style="left:934px;top:413px" width="9" height="10" viewBox="0 0 9 10"><path d="M2 1 H7 M3 1 V5 M6 1 V5 M1 5 H8 M4.5 5 V9.5" stroke="#7a7a7a" fill="none" stroke-width="1"/></svg>
<div class="a" style="left:945px;top:413px;width:11px;height:10px;border:1px solid #a04030;border-radius:2px;background:linear-gradient(#e8908a,#c84c3c)"></div>
<svg style="left:948px;top:415.5px" width="5" height="5"><path d="M0.5 0.5 L4.5 4.5 M4.5 0.5 L0.5 4.5" stroke="#fff" stroke-width="1.3"/></svg>
<div class="a" style="left:731px;top:425px;width:227px;height:24px;background:linear-gradient(#eef0f6,#dde2ef 45%,#d2d8ea);border-bottom:1px solid #9ea4b0"></div>
<div class="grip" style="left:735px;top:430px;height:16px"></div>
<div class="a" style="left:738px;top:430.5px;width:70px;height:16px;background:#b8d4ee;border:1px solid #9ab8dc"></div>
<div class="a" style="left:802px;top:431px;width:5px;height:15px;background:#fff;border-left:1px solid #b0b8c0"></div>
<div class="t" style="left:741px;top:434.5px;font-size:9px;color:#50688a">Custom</div><svg style="left:803.5px;top:436px" width="3" height="3"><path d="M0 0 H3 L1.5 2 Z" fill="#222"/></svg>
<svg style="left:811px;top:432px" width="13" height="13" viewBox="0 0 13 13"><path d="M1 8 Q1 12 5 12 L5 9 Q3 9 3 8 Z" fill="#8890d0"/><path d="M4 9 L10 3 L12 5 L6 11 Z" fill="#50b050" stroke="#308030" stroke-width="0.6"/><path d="M8 1 Q12 1 12 4" stroke="#a8c0e0" fill="none"/></svg>
<svg style="left:826px;top:436px" width="5" height="3"><path d="M0 0 H4.2 L2.1 2.5 Z" fill="#000"/></svg>
<svg style="left:836px;top:431px" width="13" height="13" viewBox="0 0 13 12"><path d="M1 8 L7 1.5 Q8.5 0.5 10 1.5 L12 3.5 Q12.5 5 11.5 6 L6 11 H2.5 Z" fill="#f4f4f4" stroke="#909090" stroke-width="0.8"/><path d="M3.5 6 L7 9.5" stroke="#909090" stroke-width="0.8"/></svg>
<svg style="left:855px;top:433px" width="10" height="10" viewBox="0 0 10 10"><path d="M1 1 L9 9 M9 1 L1 9" stroke="#a8acb4" stroke-width="2.2"/></svg>
<svg style="left:871px;top:440px" width="5" height="3"><path d="M0 0 H4.2 L2.1 2.5 Z" fill="#000"/></svg>
<div id="fgrid"></div>

<div class="a" style="left:731px;top:449px;width:2px;height:279px;background:#c4c4c4"></div>
<div class="fl" style="top:449.5px;height:16.5px"><div class="flt" style="top:4.8px">Completion</div><div class="fsep"></div><div class="fdd"></div></div>
<div class="fl" style="top:466px;height:15.5px"><div class="flt" style="top:4.8px">Due Date</div><div class="fsep"></div><div class="fdd"></div></div>
<div class="fl" style="top:481.5px;height:15.800000000000011px"><div class="flt" style="top:4.8px">Status</div><div class="fsep"></div><div class="fdd"></div></div>
<div class="fl" style="top:497.3px;height:16.099999999999966px"><div class="flt" style="top:4.8px">Priority</div><div class="fsep"></div><div class="fdd"></div></div>
<div class="fl" style="top:513.4px;height:15.600000000000023px"><div class="flt" style="top:4.8px">Task Name</div><div class="fsep"></div></div>
<div class="fl" style="top:529px;height:16px"><div class="flt" style="top:4.8px">Date Created</div><div class="fsep"></div><div class="fdd"></div></div>
<div class="fl" style="top:545px;height:15.5px"><div class="flt" style="top:4.8px">Date Last Modified</div><div class="fsep"></div><div class="fdd"></div></div>
<div class="fl" style="top:560.5px;height:15.75px"><div class="flt" style="top:4.8px">Date Opened</div><div class="fsep"></div><div class="fdd"></div></div>
<div class="fl" style="top:576.25px;height:15.75px"><div class="flt" style="top:4.8px">Date Completed</div><div class="fsep"></div><div class="fdd"></div></div>
<div class="a" style="left:731px;top:728px;width:227px;height:1px;background:#a0a0a0"></div>
<div class="a" style="left:731px;top:729px;width:227px;height:23px;background:#fff"></div>
<div class="a" style="left:734px;top:733px;width:100px;height:1px;background:#a0a0a0"></div>
<div class="a" style="left:834px;top:733px;width:124px;height:1px;background:#a0a0a0"></div>
<div class="a" style="left:776px;top:734px;width:58px;height:15px;background:#e2e2e2;border-right:1px solid #b0b0b0;border-bottom:1px solid #b0b0b0"></div>
<div class="a" style="left:734px;top:732px;width:42px;height:17.5px;background:#fff;border:1px solid #a8a8a8;border-top:none"></div>
<div class="t" style="left:737px;top:737.5px;font-size:8px;color:#333">Filters Bar</div>
<div class="t" style="left:778px;top:737.5px;font-size:8px;color:#333">Navigation Bar</div>
<div class="t" style="left:760.5px;top:749px;font-family:'Liberation Mono',monospace;font-size:16px;font-weight:bold;color:#2a0000;letter-spacing:0.4px">www.todolistsoft.com</div>
</body></html>
